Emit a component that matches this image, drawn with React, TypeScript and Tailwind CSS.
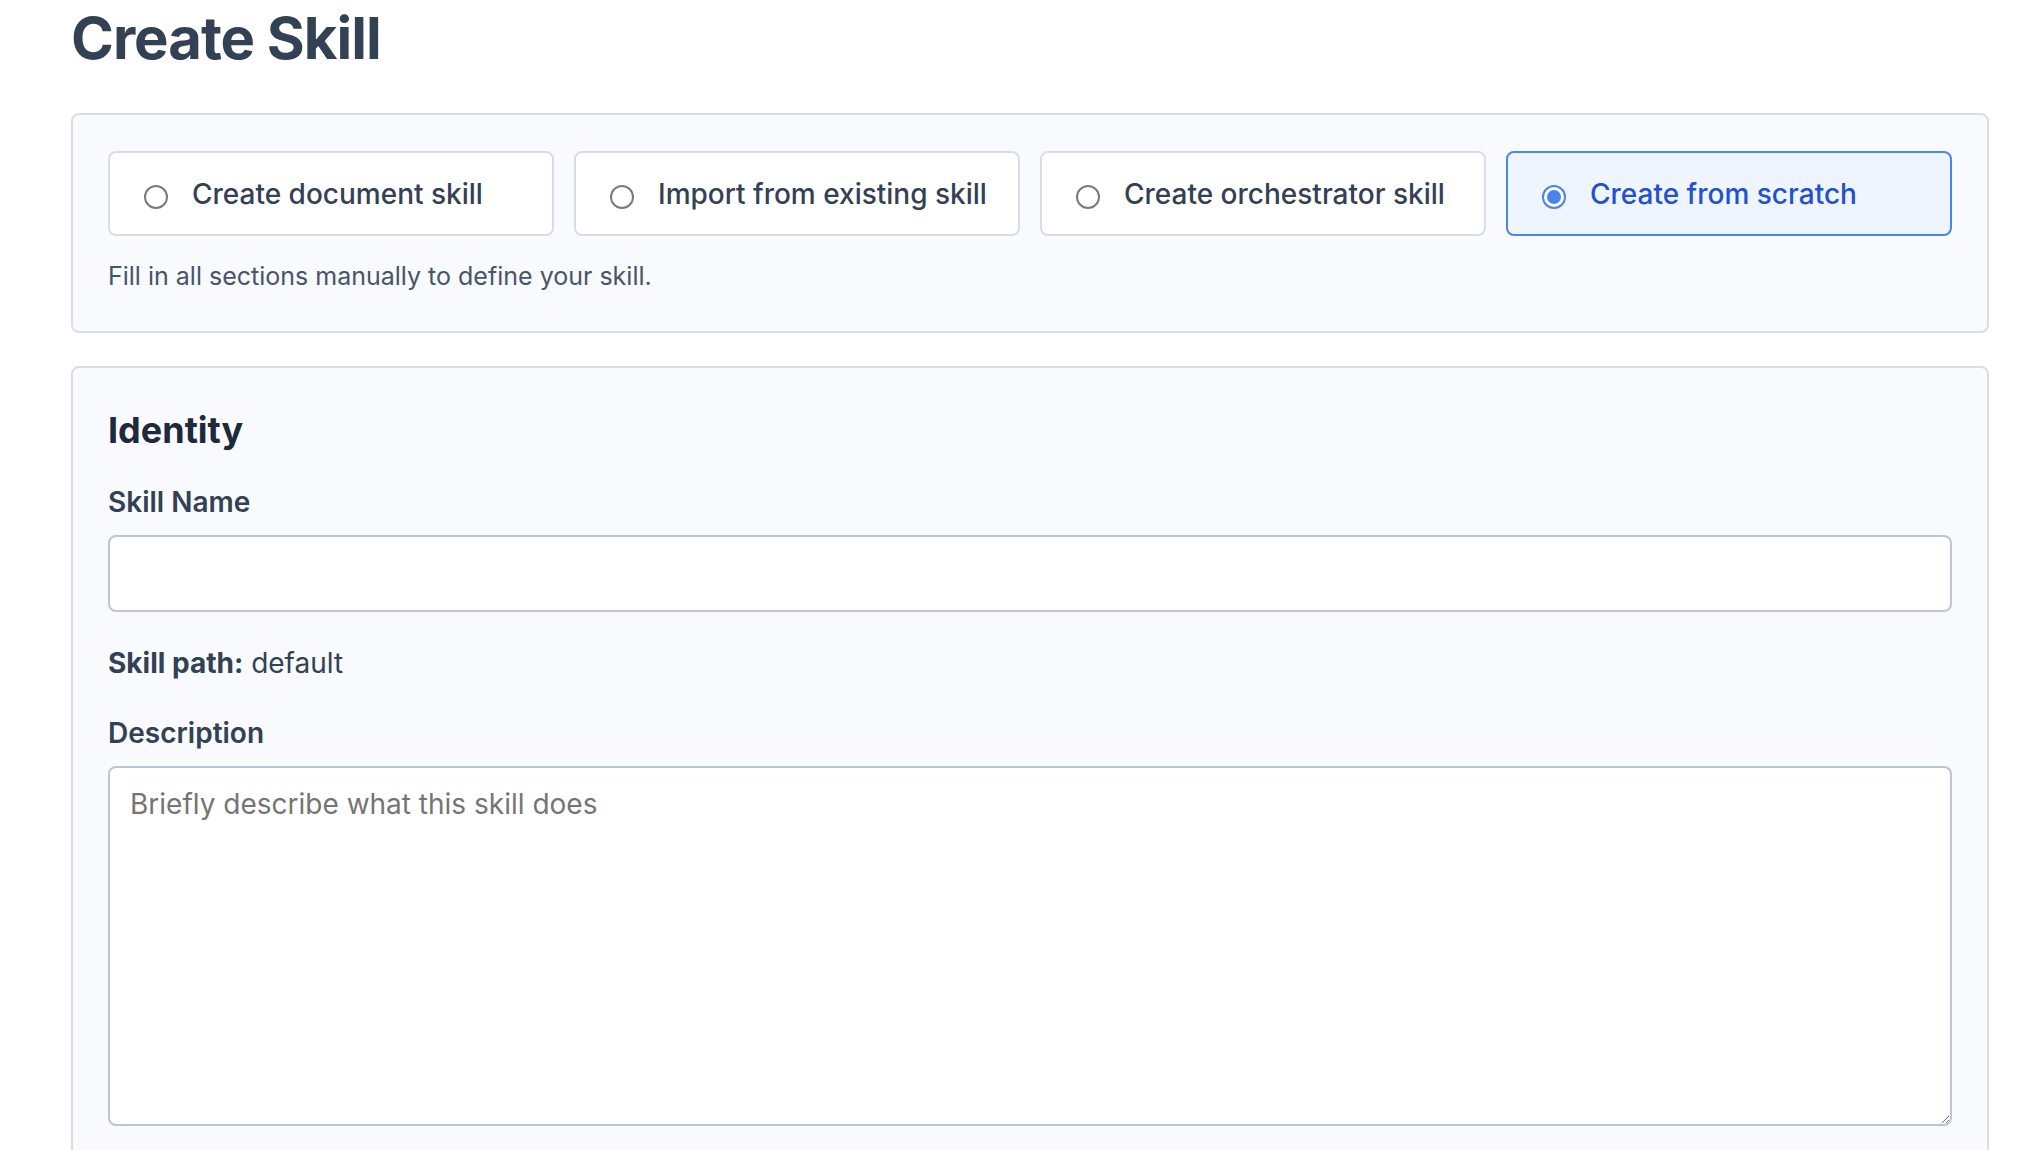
import { useState } from 'react'

const modes = [
  { id: 'document', label: 'Create document skill' },
  { id: 'import', label: 'Import from existing skill' },
  { id: 'orchestrator', label: 'Create orchestrator skill' },
  { id: 'scratch', label: 'Create from scratch' },
]

function Radio({ checked }: { checked: boolean }) {
  if (checked) {
    return (
      <span className="mt-[7px] flex h-6 w-6 shrink-0 items-center justify-center rounded-full border-2 border-[#4a83ea] bg-white">
        <span className="h-[14px] w-[14px] rounded-full bg-[#4a83ea]" />
      </span>
    )
  }
  return <span className="mt-[7px] h-6 w-6 shrink-0 rounded-full border-2 border-[#7a7a7a] bg-white" />
}

export default function App() {
  const [mode, setMode] = useState('scratch')
  const [name, setName] = useState('')
  const [description, setDescription] = useState('')

  return (
    <div className="min-h-screen bg-white pl-[71px] pr-[35px] font-['Inter',sans-serif]">
      <h1 className="pt-[2px] text-[58px] leading-[72px] font-bold tracking-[-1px] text-[#334155]">Create Skill</h1>

      {/* Mode picker */}
      <div className="mt-[39px] rounded-lg border-2 border-[#d8dee8] bg-[#f8fafd] px-[35px] pt-[36px] pb-[39px]">
        <div className="flex gap-5">
          {modes.map((m) => {
            const active = m.id === mode
            return (
              <button
                key={m.id}
                onClick={() => setMode(m.id)}
                className={`flex h-[85px] flex-1 items-center gap-6 rounded-lg border-2 pl-[34px] text-left ${
                  active ? 'border-[#4b86ea] bg-[#eef5ff]' : 'border-[#d8dee8] bg-white'
                }`}
              >
                <Radio checked={active} />
                <span
                  className={`text-[28px] leading-[40px] font-medium ${active ? 'text-[#2450d0]' : 'text-[#334155]'}`}
                >
                  {m.label}
                </span>
              </button>
            )
          })}
        </div>
        <p className="mt-[25px] text-[25px] leading-[31px] text-[#475569]">
          Fill in all sections manually to define your skill.
        </p>
      </div>

      {/* Identity */}
      <div className="mt-[33px] rounded-lg border-2 border-[#d8dee8] bg-[#f8fafd] px-[35px] pt-[38px] pb-[60px]">
        <h2 className="text-[36px] leading-[48px] font-bold text-[#1e293b]">Identity</h2>

        <label className="mt-[28px] block text-[28px] leading-[40px] font-semibold text-[#334155]">Skill Name</label>
        <input
          value={name}
          onChange={(e) => setName(e.target.value)}
          className="mt-[13px] block h-[77px] w-full rounded-lg border-2 border-[#b9c6d9] bg-white px-5 text-[28px] text-[#334155] outline-none"
        />

        <p className="mt-[30px] text-[28px] leading-[42px] text-[#334155]">
          <span className="font-bold">Skill path:</span> default
        </p>

        <label className="mt-[28px] block text-[28px] leading-[42px] font-semibold text-[#334155]">Description</label>
        <textarea
          value={description}
          onChange={(e) => setDescription(e.target.value)}
          placeholder="Briefly describe what this skill does"
          className="mt-[12px] block h-[360px] w-full rounded-lg border-2 border-[#b9c6d9] bg-white px-5 pt-[16px] text-[28px] leading-[40px] text-[#334155] outline-none placeholder:text-[#757575]"
        />
      </div>
    </div>
  )
}
